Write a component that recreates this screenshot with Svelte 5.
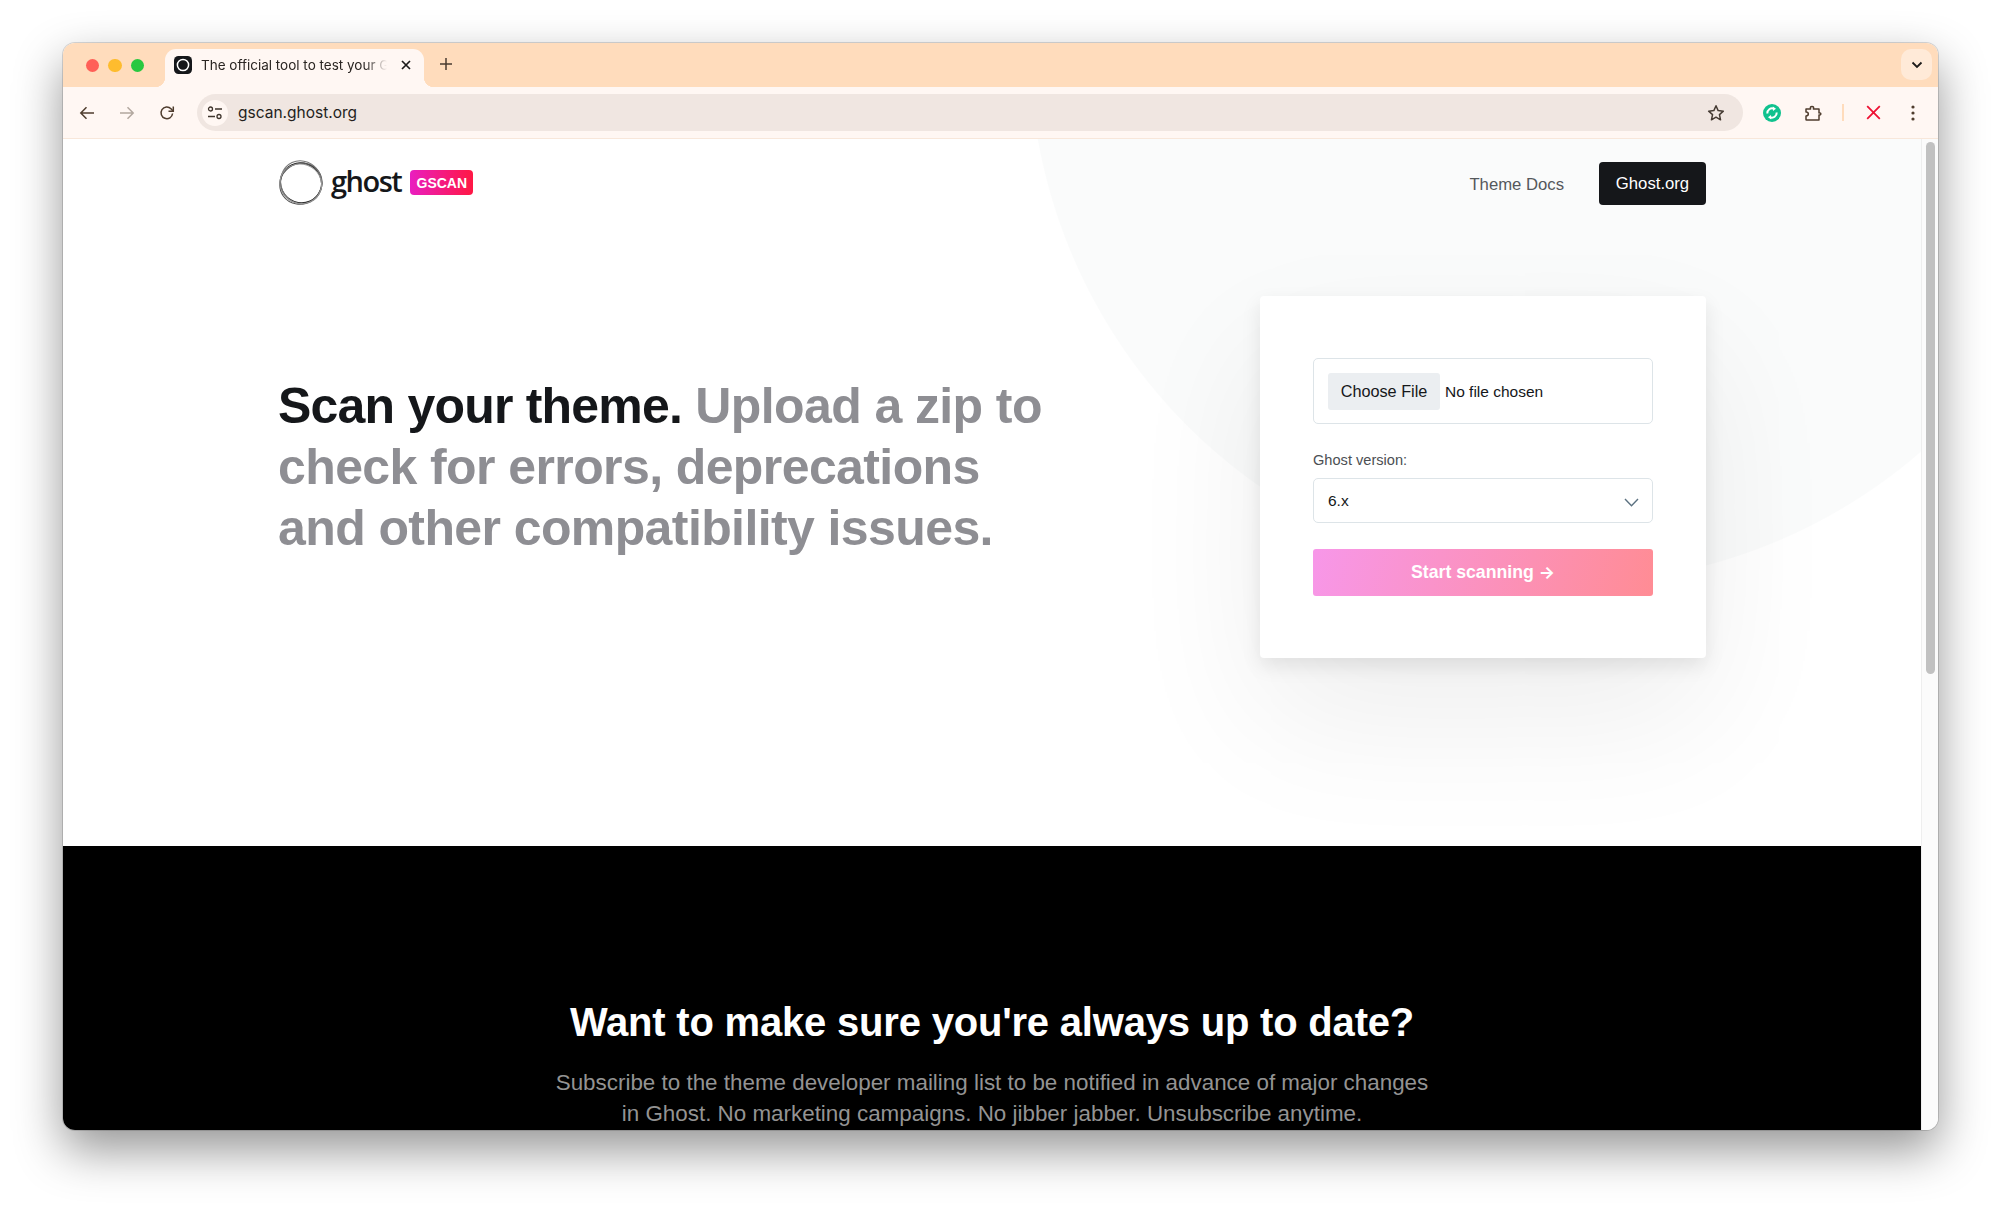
<script>
  let title = 'The official tool to test your Ghost theme';
  let url = 'gscan.ghost.org';
  let version = '6.x';
</script>

<div class="desk">
  <div class="window">
    <div class="tabstrip">
      <div class="lights">
        <span class="light red"></span>
        <span class="light yellow"></span>
        <span class="light green"></span>
      </div>
      <div class="tab">
        <svg class="favicon" width="18" height="18" viewBox="0 0 18 18">
          <rect width="18" height="18" rx="4.5" fill="#15171a" />
          <circle cx="9" cy="9" r="5.6" fill="none" stroke="#fff" stroke-width="1.5" />
        </svg>
        <span class="tab-title">{title}</span>
        <svg class="tab-close" width="12" height="12" viewBox="0 0 12 12">
          <path d="M2 2l8 8M10 2l-8 8" stroke="#1d1b1a" stroke-width="1.7" fill="none" />
        </svg>
      </div>
      <svg class="newtab" width="14" height="14" viewBox="0 0 14 14">
        <path d="M7 1v12M1 7h12" stroke="#4a3b30" stroke-width="1.5" fill="none" />
      </svg>
      <div class="tabsearch">
        <svg width="12" height="8" viewBox="0 0 12 8">
          <path d="M1.5 1.5L6 6l4.500-4.500" stroke="#1d1b1a" stroke-width="1.8" fill="none" />
        </svg>
      </div>
    </div>

    <div class="toolbar">
      <svg class="tool" width="16" height="16" viewBox="0 0 16 16">
        <path d="M15 8H1.800M7.500 2.300L1.800 8l5.700 5.700" stroke="#4f3d2e" stroke-width="1.500" fill="none" />
      </svg>
      <svg class="tool" width="16" height="16" viewBox="0 0 16 16">
        <path d="M1 8h13.200M8.500 2.300L14.200 8l-5.700 5.700" stroke="#b3a89f" stroke-width="1.500" fill="none" />
      </svg>
      <svg class="tool" width="16" height="16" viewBox="0 0 16 16">
        <path d="M13.600 8.500A5.800 5.800 0 1 1 12 3.800L14 6" stroke="#4f3d2e" stroke-width="1.500" fill="none" />
        <path d="M14.300 1.500v4.800H9.500" stroke="#4f3d2e" stroke-width="1.500" fill="none" />
      </svg>
      <div class="omnibox">
        <span class="tune">
          <svg width="16" height="14" viewBox="0 0 16 14">
            <circle cx="3.500" cy="3" r="2" fill="none" stroke="#3e342c" stroke-width="1.300" />
            <path d="M8 3h7M1 10.500h7" stroke="#3e342c" stroke-width="1.300" fill="none" />
            <circle cx="12" cy="10.500" r="2" fill="none" stroke="#3e342c" stroke-width="1.300" />
          </svg>
        </span>
        <span class="url">{url}</span>
        <svg class="star" width="18" height="18" viewBox="0 0 18 18">
          <path d="M9 1.800l2.150 4.800 5.200.55-3.900 3.500 1.100 5.150L9 13.200l-4.550 2.600 1.100-5.150-3.900-3.500 5.200-.55z" fill="none" stroke="#463c34" stroke-width="1.500" stroke-linejoin="round" />
        </svg>
      </div>
      <div class="extensions">
        <svg class="ext-sync" width="18" height="18" viewBox="0 0 18 18">
          <circle cx="9" cy="9" r="9" fill="#10c28e" />
          <path d="M4.300 9.500A4.800 4.800 0 0 1 11 4.800" stroke="#fff" stroke-width="2" fill="none" />
          <path d="M9.800 2.400l3.200 2.300-3 2.400z" fill="#fff" />
          <path d="M13.700 8.500A4.800 4.800 0 0 1 7 13.200" stroke="#fff" stroke-width="2" fill="none" />
          <path d="M8.200 15.600L5 13.300l3-2.400z" fill="#fff" />
        </svg>
        <svg class="ext-puzzle" width="18" height="18" viewBox="0 0 18 18">
          <path d="M2 5h4.600c-.3-.8-.3-1.500 0-2 .5-.8 2.300-.8 2.800 0 .3.500.3 1.200 0 2H15v4c.8-.2 1.500-.1 1.700.400.2.500 0 1.100-.2 1.300-.300.300-.900.300-1.500.200V16H2.500c-.300 0-.500-.200-.500-.500v-3.500c1.500 0 2.300-.800 2.300-1.900S3.500 8 2 8V5z" fill="none" stroke="#4f3d2e" stroke-width="1.500" stroke-linejoin="round" />
        </svg>
        <span class="divider"></span>
        <svg class="ext-close" width="15" height="15" viewBox="0 0 15 15">
          <path d="M1.200 1.200l12.600 12.600M13.800 1.200L1.200 13.800" stroke="#ee1133" stroke-width="1.800" fill="none" />
        </svg>
        <svg class="ext-menu" width="4" height="16" viewBox="0 0 4 16">
          <circle cx="2" cy="2" r="1.600" fill="#4f3d2e" />
          <circle cx="2" cy="8" r="1.600" fill="#4f3d2e" />
          <circle cx="2" cy="14" r="1.600" fill="#4f3d2e" />
        </svg>
      </div>
    </div>

    <div class="viewport">
      <div class="page">
        <section class="hero">
          <div class="container">
            <header class="site-head">
              <div class="logo">
                <svg class="ring" width="46" height="46" viewBox="0 0 46 46">
                  <g fill="none">
                    <ellipse cx="23" cy="23" rx="20.800" ry="19.800" transform="rotate(20 23 23)" stroke="#222" stroke-width="1.400" />
                    <ellipse cx="22.500" cy="23.500" rx="21.500" ry="20" transform="rotate(-35 23 23)" stroke="#555" stroke-width="1.100" />
                    <ellipse cx="22.500" cy="22.500" rx="21.800" ry="20.400" transform="rotate(65 23 23)" stroke="#777" stroke-width="1" />
                    <ellipse cx="23.800" cy="23" rx="19.600" ry="21" transform="rotate(110 23 23)" stroke="#999" stroke-width="1" />
                  </g>
                </svg>
                <span class="wordmark">ghost</span>
                <span class="badge">GSCAN</span>
              </div>
              <nav class="nav">
                <a class="nav-link" href="#docs">Theme Docs</a>
                <a class="nav-btn" href="#ghost">Ghost.org</a>
              </nav>
            </header>

            <div class="hero-main">
              <h1 class="headline">
                <strong>Scan your theme.</strong> Upload a zip to check for errors, deprecations and other compatibility issues.
              </h1>
              <form class="card">
                <input class="file" type="file" />
                <label class="version-label" for="version">Ghost version:</label>
                <div class="select-wrap">
                  <select id="version" class="select" bind:value={version}>
                    <option>6.x</option>
                    <option>5.x</option>
                    <option>4.x</option>
                  </select>
                  <svg class="caret" width="15" height="9" viewBox="0 0 15 9">
                    <path d="M1 1l6.500 6.800L14 1" stroke="#5b7180" stroke-width="1.400" fill="none" />
                  </svg>
                </div>
                <button class="scan" type="button">Start scanning <span class="arrow">→</span></button>
              </form>
            </div>
          </div>
        </section>

        <section class="subscribe">
          <h2>Want to make sure you're always up to date?</h2>
          <p>Subscribe to the theme developer mailing list to be notified in advance of major changes in Ghost. No marketing campaigns. No jibber jabber. Unsubscribe anytime.</p>
        </section>
      </div>
      <div class="scrollbar"><div class="thumb"></div></div>
    </div>
  </div>
</div>

<style>
  :global(body) {
    margin: 0;
    background: #fff;
    overflow: hidden;
  }

  .desk {
    height: 1213px;
    box-sizing: border-box;
    padding: 43px 62px 0 63px;
    font-family: "Liberation Sans", Arial, sans-serif;
  }

  .window {
    height: 1087px;
    display: flex;
    flex-direction: column;
    overflow: hidden;
    border-radius: 12px;
    box-shadow: 0 0 0 1px rgba(0, 0, 0, 0.14), 0 20px 48px rgba(0, 0, 0, 0.42);
  }

  /* browser chrome */
  .tabstrip {
    height: 44px;
    flex: none;
    display: flex;
    align-items: flex-end;
    background: #ffdcbc;
  }

  .lights {
    display: flex;
    gap: 9px;
    padding: 0 0 15px 22.500px;
    width: 79.500px;
  }

  .light {
    width: 13.500px;
    height: 13.500px;
    border-radius: 50%;
  }
  .red { background: #ff5f57; }
  .yellow { background: #febc2e; }
  .green { background: #28c840; }

  .tab {
    position: relative;
    width: 259px;
    height: 38px;
    box-sizing: border-box;
    padding: 0 12px 7px 9px;
    display: flex;
    align-items: center;
    background: #fff7f3;
    border-radius: 11px 11px 0 0;
  }

  .tab::before,
  .tab::after {
    content: "";
    position: absolute;
    bottom: 0;
    width: 10px;
    height: 10px;
  }
  .tab::before {
    left: -10px;
    background: radial-gradient(circle at 0 0, transparent 10px, #fff7f3 10.500px);
  }
  .tab::after {
    right: -10px;
    background: radial-gradient(circle at 100% 0, transparent 10px, #fff7f3 10.500px);
  }

  .favicon {
    flex: none;
  }

  .tab-title {
    width: 187px;
    margin-left: 9px;
    overflow: hidden;
    white-space: nowrap;
    font: 13.500px "Inter", "Liberation Sans", sans-serif;
    color: #2a2522;
    -webkit-mask-image: linear-gradient(90deg, #000 88%, transparent);
    mask-image: linear-gradient(90deg, #000 88%, transparent);
  }

  .tab-close {
    margin-left: 13px;
    flex: none;
  }

  .newtab {
    margin: 0 0 16px 15px;
  }

  .tabsearch {
    width: 31px;
    height: 31px;
    margin: 0 6px 7px auto;
    display: flex;
    align-items: center;
    justify-content: center;
    background: #ffead8;
    border-radius: 10px;
  }

  .toolbar {
    height: 52px;
    flex: none;
    box-sizing: border-box;
    display: flex;
    align-items: center;
    padding: 0 16px;
    background: #fff7f3;
    border-bottom: 1px solid #f8e7da;
  }

  .tool {
    margin-right: 24px;
    flex: none;
  }

  .omnibox {
    width: 1546px;
    height: 37px;
    margin-left: -2px;
    flex: none;
    display: flex;
    align-items: center;
    padding: 0 12px 0 5px;
    box-sizing: border-box;
    background: #f0e6e1;
    border-radius: 19px;
  }

  .tune {
    width: 26px;
    height: 26px;
    display: flex;
    align-items: center;
    justify-content: center;
    background: #fff7f3;
    border-radius: 50%;
  }

  .url {
    margin-left: 10px;
    font: 15.500px "Inter", "Liberation Sans", sans-serif;
    color: #241f1c;
  }

  .star {
    margin-left: auto;
    margin-right: 6px;
  }

  .extensions {
    display: flex;
    align-items: center;
  }

  .ext-sync { margin-left: 20px; }
  .ext-puzzle { margin-left: 23px; }
  .ext-close { margin-left: 22px; }
  .ext-menu { margin-left: 30px; }

  .divider {
    width: 2px;
    height: 17px;
    margin-left: 20px;
    background: #ffdcbc;
  }

  /* page */
  .viewport {
    flex: 1;
    min-height: 0;
    display: flex;
  }

  .page {
    flex: 1;
    min-width: 0;
    overflow: hidden;
  }

  .scrollbar {
    width: 17px;
    flex: none;
    box-sizing: border-box;
    padding: 3px 3px 0 4px;
    background: #fbfbfb;
    border-left: 1px solid #eeeeee;
  }

  .thumb {
    height: 532px;
    background: #c1c1c1;
    border-radius: 5px;
  }

  .hero {
    height: 707px;
    background: radial-gradient(circle 539px at 1505px -94px, #fafbfb 99.800%, #fff 100%);
  }

  .container {
    width: 1428px;
    margin: 0 auto;
  }

  .site-head {
    height: 66px;
    box-sizing: border-box;
    padding-top: 23px;
    display: flex;
    align-items: flex-start;
    justify-content: space-between;
  }

  .logo {
    display: flex;
    align-items: center;
    height: 41px;
  }

  .ring {
    flex: none;
  }

  .wordmark {
    margin: -4px 0 0 7px;
    font: 600 29px "Open Sans", sans-serif;
    letter-spacing: -1.500px;
    color: #15171a;
  }

  .badge {
    margin-left: 9px;
    width: 63px;
    height: 25px;
    display: flex;
    align-items: center;
    justify-content: center;
    font-size: 14px;
    font-weight: 700;
    color: #fff;
    background: linear-gradient(90deg, #e91ec0, #ff1744);
    border-radius: 4px;
  }

  .nav {
    display: flex;
    align-items: center;
    gap: 35px;
  }

  .nav-link {
    margin-top: 2px;
    font-size: 16.700px;
    color: #55585c;
    text-decoration: none;
  }

  .nav-btn {
    width: 107px;
    height: 43px;
    display: flex;
    align-items: center;
    justify-content: center;
    font-size: 16.700px;
    color: #fff;
    background: #15171a;
    border-radius: 4px;
    text-decoration: none;
  }

  .hero-main {
    display: flex;
    justify-content: space-between;
    align-items: flex-start;
    padding-top: 91px;
  }

  .headline {
    width: 790px;
    margin: 79.500px 0 0;
    font-size: 50px;
    line-height: 61px;
    letter-spacing: -0.600px;
    font-weight: 700;
    color: #8e8e93;
  }

  .headline strong {
    color: #15171a;
    letter-spacing: -0.800px;
  }

  .card {
    width: 446px;
    box-sizing: border-box;
    padding: 62px 53px;
    display: flex;
    flex-direction: column;
    background: #fff;
    border-radius: 4px;
    box-shadow: 0 8px 20px rgba(0, 0, 0, 0.09), 0 60px 140px rgba(0, 0, 0, 0.07);
  }

  .file {
    height: 66px;
    box-sizing: border-box;
    padding: 14px;
    font: 15.500px "Liberation Sans", Arial, sans-serif;
    color: #15171a;
    border: 1px solid #dde4e8;
    border-radius: 5px;
  }

  .file::file-selector-button {
    height: 37px;
    width: 112px;
    margin-right: 5px;
    padding: 0;
    font: 16.250px "Liberation Sans", Arial, sans-serif;
    color: #15171a;
    background: #ebeef1;
    border: 0;
    border-radius: 3px;
  }

  .version-label {
    margin-top: 26px;
    font-size: 14.600px;
    line-height: 20px;
    color: #4c4f53;
  }

  .select-wrap {
    position: relative;
    margin-top: 8px;
  }

  .select {
    display: block;
    width: 100%;
    height: 45px;
    box-sizing: border-box;
    padding: 0 14px;
    appearance: none;
    font: 15.500px "Liberation Sans", Arial, sans-serif;
    color: #15171a;
    background: #fff;
    border: 1px solid #dde4e8;
    border-radius: 5px;
  }

  .caret {
    position: absolute;
    right: 14px;
    top: 20px;
    pointer-events: none;
  }

  .scan {
    height: 47px;
    margin-top: 26px;
    font: 700 17.700px "Liberation Sans", Arial, sans-serif;
    color: #fff;
    background: linear-gradient(105deg, #f797e9, #ff8c94);
    border: 0;
    border-radius: 3px;
  }

  .arrow {
    font-family: "Inter", sans-serif;
    font-size: 17px;
  }

  .subscribe {
    height: 284px;
    box-sizing: border-box;
    padding-top: 153.500px;
    text-align: center;
    background: #000;
  }

  .subscribe h2 {
    margin: 0;
    font-size: 40px;
    line-height: 44px;
    letter-spacing: -0.200px;
    font-weight: 700;
    color: #fff;
  }

  .subscribe p {
    width: 880px;
    margin: 23px auto 0;
    font-size: 22.400px;
    line-height: 31px;
    color: #939393;
  }
</style>
